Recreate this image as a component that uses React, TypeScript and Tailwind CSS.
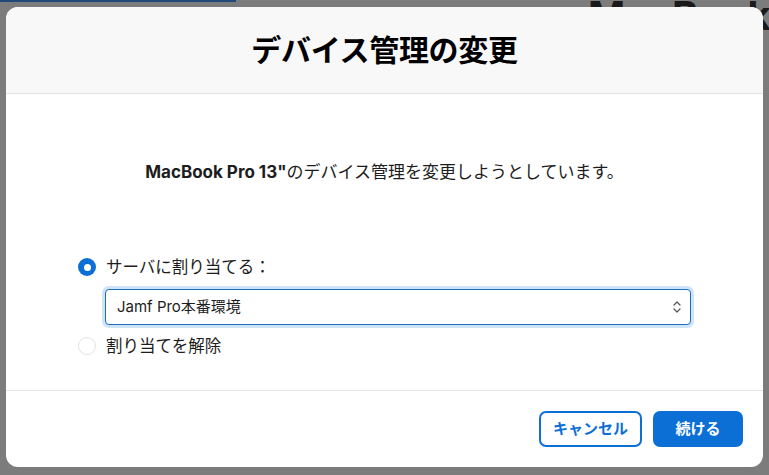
import React from "react";

const font = { fontFamily: 'Inter, "Noto Sans CJK JP", sans-serif' };

function Radio({ checked }: { checked: boolean }) {
  return checked ? (
    <span className="flex h-[18px] w-[18px] items-center justify-center rounded-full bg-[#0b6fd6]">
      <span className="h-[7px] w-[7px] rounded-full bg-white" />
    </span>
  ) : (
    <span className="h-[18px] w-[18px] rounded-full border border-[#e3e3e3] bg-white" />
  );
}

export default function App() {
  return (
    <div className="relative h-[475px] w-[769px] overflow-hidden bg-[#7c7c7c]" style={font}>
      {/* page behind the sheet */}
      <div className="absolute left-0 top-0 h-[2px] w-[236px] bg-[#1d4a78]" />
      <div className="absolute left-[588px] top-[-4px] whitespace-nowrap text-[40px] font-bold leading-none text-[#1a1a1a]">
        MacBook P
      </div>

      <div className="relative ml-[6px] mt-[7px] flex h-[460px] w-[757px] flex-col overflow-hidden rounded-[12px] bg-white">
        <div className="flex h-[87px] shrink-0 items-center justify-center border-b border-[#e4e4e4] bg-[#f8f8f8]">
          <h1 className="text-[30px] font-bold tracking-[-0.3px] text-black">デバイス管理の変更</h1>
        </div>

        <div className="flex flex-1 flex-col">
          <p className="mt-[66px] text-center text-[17px] leading-[24px] text-[#1d1d1d]">
            <span className="font-bold">MacBook Pro 13"</span>のデバイス管理を変更しようとしています。
          </p>

          <div className="ml-[72px] mt-[72px] flex flex-col">
            <label className="flex items-center gap-[10px]">
              <Radio checked />
              <span className="text-[16.5px] leading-[22px] text-[#1d1d1d]">サーバに割り当てる：</span>
            </label>
            <div className="ml-[27px] mt-[11px] flex h-[36px] w-[586px] items-center justify-between rounded-[4px] border border-[#1b6dc1] bg-white pl-[11px] pr-[8px] shadow-[0_0_0_3px_#cfe3fb]">
              <span className="text-[15px] text-[#1d1d1d]">Jamf Pro本番環境</span>
              <svg width="10" height="14" viewBox="0 0 10 14" fill="none" stroke="#555" strokeWidth="1.2" strokeLinecap="round" strokeLinejoin="round">
                <path d="M2 5 L5 2 L8 5" />
                <path d="M2 9 L5 12 L8 9" />
              </svg>
            </div>
            <label className="mt-[10px] flex items-center gap-[10px]">
              <Radio checked={false} />
              <span className="text-[16.5px] leading-[22px] text-[#1d1d1d]">割り当てを解除</span>
            </label>
          </div>
        </div>

        <div className="flex h-[77px] shrink-0 items-start justify-end gap-[11px] border-t border-[#e4e4e4] pr-[20px] pt-[20px]">
          <button className="h-[36px] w-[103px] rounded-[7px] border-2 border-[#0b6fd6] bg-white text-[15px] font-bold text-[#0b6fd6]">
            キャンセル
          </button>
          <button className="h-[36px] w-[90px] rounded-[7px] bg-[#0b6fd6] text-[15px] font-bold text-white">
            続ける
          </button>
        </div>
      </div>
    </div>
  );
}
